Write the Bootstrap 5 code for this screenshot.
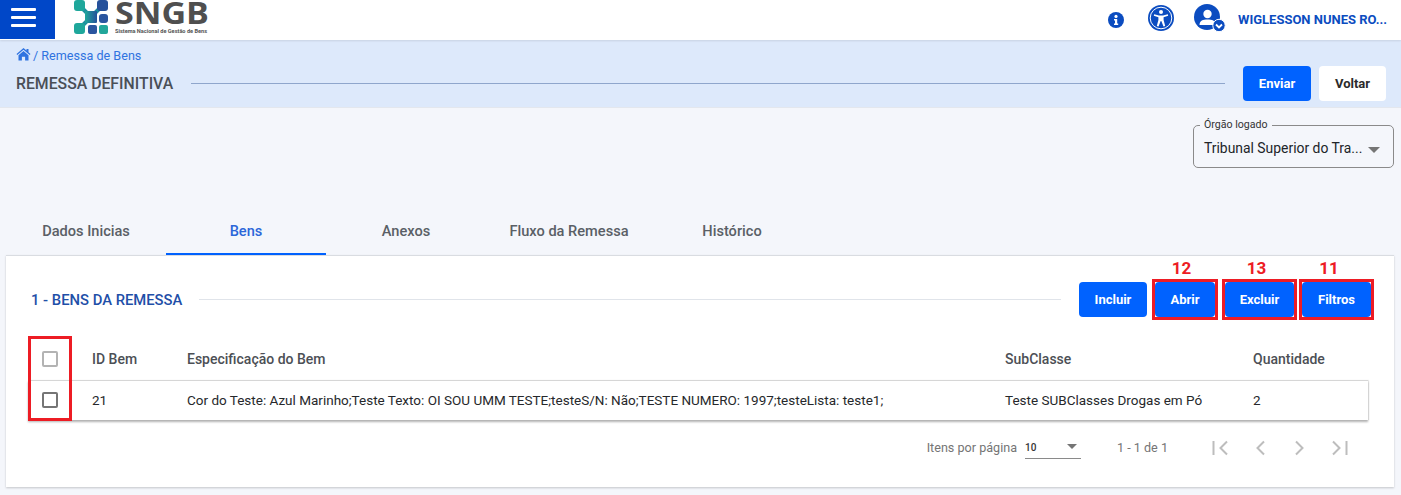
<!DOCTYPE html>
<html lang="pt-BR">
<head>
  <meta charset="UTF-8">
  <meta name="viewport" content="width=device-width, initial-scale=1.0">
  <title>SNGB - Remessa Definitiva</title>
  <link href="https://cdn.jsdelivr.net/npm/bootstrap@5.3.0/dist/css/bootstrap.min.css" rel="stylesheet">
  <style>
    body {
      font-family: Roboto, "Liberation Sans", sans-serif;
      background-color: #f4f6fb;
      height: 495px;
      overflow: hidden;
      color: #212529;
    }
    .top-bar {
      height: 40px;
      background: #fff;
      box-shadow: 0 1px 2px rgba(0, 0, 0, 0.1);
      position: relative;
    }
    .menu-box {
      width: 55px;
      height: 39px;
      background: #0047c8;
      padding: 0 8px 4px 0;
    }
    .menu-box span {
      display: block;
      width: 25px;
      height: 3px;
      margin: 2.5px 0;
      background: #fff;
      border-radius: 1px;
    }
    .logo-wrap { margin-left: 19px; height: 39px; }
    .logo-icon { margin-right: 7px; }
    .logo-name {
      font-family: "Open Sans", sans-serif;
      font-weight: 700;
      font-size: 31px;
      fill: #4f4f4f;
    }
    .logo-sub {
      font-family: Roboto, sans-serif;
      font-size: 5.6px;
      font-weight: 700;
      fill: #555;
    }
    .tool-icons { height: 39px; }
    .tool-info { margin-right: 24px; }
    .tool-access { margin: 0 20px 3px 0; }
    .tool-user { margin-bottom: 3px; }
    .user-name {
      color: #0b4cc0;
      font-size: 13px;
      font-weight: 700;
      margin-left: 12px;
      margin-right: 15px;
      width: 148px;
      white-space: nowrap;
    }
    .title-band {
      height: 68px;
      background: #dde9fb;
      border-bottom: 1px solid #e3e7ee;
      padding: 0 15px 0 16px;
    }
    .crumb {
      font-size: 12.6px;
      color: #2f73e0;
      height: 26px;
      padding-top: 8px;
      line-height: 16px;
    }
    .crumb svg { margin-right: 2px; }
    .page-title {
      font-size: 15.8px;
      font-weight: 500;
      color: #4a4f57;
      white-space: nowrap;
    }
    .title-rule {
      height: 1px;
      background: #8fa6cc;
      margin: 0 18px;
    }
    .act-btn {
      font-size: 13px;
      font-weight: 700;
      height: 35px;
      padding: 0;
      border: 0;
      border-radius: 4px;
      background: #0062ff;
      color: #fff;
    }
    .act-btn:hover { background: #0056e0; color: #fff; }
    .act-light { background: #fff; color: #2b2b2b; }
    .act-light:hover { background: #fff; color: #2b2b2b; }
    .org-row { height: 108px; padding: 17px 7px 0 0; }
    .org-field {
      width: 201px;
      height: 43px;
      border: 1px solid #8a8a8a;
      border-radius: 5px;
      position: relative;
      padding: 12px 10px 0;
      font-size: 13.9px;
      line-height: 20px;
    }
    .org-label {
      position: absolute;
      top: -8px;
      left: 6px;
      padding: 0 4px;
      font-size: 10.6px;
      line-height: 13px;
      color: #333;
      background: #f4f6fb;
    }
    .org-caret, .page-caret {
      width: 0;
      height: 0;
      border-left: 5px solid transparent;
      border-right: 5px solid transparent;
      border-top: 5px solid #757575;
    }
    .org-caret { position: absolute; right: 13px; top: 21px; border-width: 6px 6px 0; }
    .tab-strip { padding-left: 6px; height: 39px; }
    .tab-item {
      min-width: 160px;
      padding: 0 24px;
      text-align: center;
      font-size: 14.6px;
      font-weight: 500;
      line-height: 30px;
      color: #5a5f66;
      height: 39px;
      white-space: nowrap;
    }
    .tab-on { color: #2b66d9; border-bottom: 2px solid #0062ff; }
    .tab-wide { width: 166px; padding: 0; }
    .main-panel {
      margin: 0 7px 0 6px;
      height: 232px;
      background: #fff;
      border-top: 1px solid #d9dce1;
      box-shadow: 0 1px 2px rgba(0, 0, 0, 0.2);
      position: relative;
      padding: 26px 20px 0 22px;
    }
    .panel-head { height: 35px; padding-left: 3px; }
    .panel-title {
      font-size: 14.8px;
      font-weight: 500;
      color: #1f4fa8;
      white-space: nowrap;
      padding-top: 1px;
    }
    .panel-rule { height: 1px; background: #e0e4ea; margin: 0 18px 0 17px; }
    .mark-box {
      position: relative;
      flex: none;
      border: 3px solid #ed1c24;
      height: 41px;
    }
    .mark-box .act-btn { width: 100%; display: block; }
    .mark-abrir { width: 66px; margin-left: 5px; }
    .mark-excluir { width: 75px; margin-left: 4px; }
    .mark-filtros { width: 75px; margin-left: 2px; }
    .mark-num {
      position: absolute;
      top: -24px;
      left: 0;
      right: 0;
      text-align: center;
      color: #ed1c24;
      font-size: 17px;
      font-weight: 700;
      line-height: 20px;
    }
    .mark-abrir .mark-num { padding-right: 7px; }
    .mark-excluir .mark-num { padding-right: 6px; }
    .mark-filtros .mark-num { padding-right: 15px; }
    .bens-table {
      width: 1340px;
      margin: 22px 0 0;
      table-layout: fixed;
      border-collapse: collapse;
      font-size: 13.5px;
    }
    .bens-table th {
      height: 41px;
      font-size: 14px;
      font-weight: 500;
      color: #4c4f55;
      border-bottom: 1px solid #d6d6d6;
      vertical-align: middle;
    }
    .bens-table td { height: 40px; vertical-align: middle; color: #26282b; white-space: nowrap; }
    .bens-table tbody tr { box-shadow: 0 2px 2px rgba(0, 0, 0, 0.3), 1px 0 1px rgba(0, 0, 0, 0.08); }
    .check-cell { padding-left: 14px; }
    .fake-check {
      display: block;
      width: 16px;
      height: 16px;
      border: 2px solid #757575;
      border-radius: 2px;
    }
    .fake-check-off { border-color: #b3b3b3; }
    .check-mark {
      position: absolute;
      left: 22px;
      top: 80px;
      width: 44px;
      height: 85px;
      border: 3px solid #ed1c24;
    }
    .pager { height: 56px; font-size: 12.6px; color: #757575; padding-right: 26px; }
    .pager-size {
      width: 56px;
      height: 22px;
      border-bottom: 1px solid #8a8a8a;
      font-size: 10px;
      font-weight: 500;
      color: #333;
      margin: 0 36px 0 8px;
      padding-top: 3px;
    }
    .page-ctrl { margin-left: 44px; gap: 24px; }
    .page-ctrl svg { display: block; }
  </style>
</head>
<body>
  <header class="top-bar d-flex align-items-start">
    <div class="menu-box d-flex flex-column align-items-center justify-content-center">
      <span></span><span></span><span></span>
    </div>
    <div class="logo-wrap d-flex align-items-start">
      <svg width="34" height="34" viewBox="0 0 34 34" class="logo-icon">
        <defs>
          <linearGradient id="lg" x1="0" y1="0" x2="1" y2="0">
            <stop offset="0" stop-color="#1ea79b"/><stop offset="1" stop-color="#26519b"/>
          </linearGradient>
        </defs>
        <path d="M8 8 L13 13 M26 8 L21 13 M8 26 L13 21" stroke="#1d8f9f" stroke-width="4"/>
        <rect x="0" y="0" width="11" height="11" rx="3" fill="#1ea79b"/>
        <rect x="23" y="0" width="11" height="11" rx="3" fill="#26519b"/>
        <rect x="11" y="11" width="12" height="12" rx="1" fill="url(#lg)"/>
        <rect x="25" y="14" width="9" height="9" rx="3" fill="#2a559f"/>
        <rect x="0" y="23" width="11" height="11" rx="3" fill="#1ea79b"/>
        <rect x="14" y="25" width="9" height="9" rx="2" fill="#2a559f"/>
        <rect x="25" y="25" width="9" height="9" rx="2" fill="#22a69a"/>
      </svg>
      <svg width="96" height="35" viewBox="0 0 96 35">
        <text class="logo-name" x="0" y="24" textLength="94" lengthAdjust="spacingAndGlyphs">SNGB</text>
        <text class="logo-sub" x="0" y="33" textLength="92">Sistema Nacional de Gestão de Bens</text>
      </svg>
    </div>
    <div class="tool-icons ms-auto d-flex align-items-center">
      <svg width="16" height="16" viewBox="0 0 16 16" class="tool-info">
        <circle cx="8" cy="8" r="8" fill="#0b4cc0"/>
        <circle cx="8" cy="4.400" r="1.600" fill="#fff"/>
        <path d="M6 7h3.200v4.400h1V13H6v-1.600h1V8.600H6z" fill="#fff"/>
      </svg>
      <svg width="26" height="26" viewBox="0 0 26 26" class="tool-access">
        <circle cx="13" cy="13" r="13" fill="#0b4cc0"/>
        <circle cx="13" cy="13" r="10.800" fill="none" stroke="#fff" stroke-width="1"/>
        <circle cx="13" cy="7" r="2" fill="#fff"/>
        <path d="M6.200 9.200 L11 10.400 H15 L19.800 9.200 L20.200 10.800 L15.600 12.200 V15 L17.200 21 L15.500 21.400 L13.300 16 H12.700 L10.500 21.400 L8.800 21 L10.400 15 V12.200 L5.800 10.800 Z" fill="#fff"/>
      </svg>
      <svg width="32" height="28" viewBox="0 0 32 28" class="tool-user">
        <circle cx="13" cy="13" r="13" fill="#0b4cc0"/>
        <circle cx="13.500" cy="10" r="4.200" fill="#fff"/>
        <path d="M5.500 21 C5.500 16.500 9 15.500 13.500 15.500 S21.500 16.500 21.500 21 Z" fill="#fff"/>
        <circle cx="25" cy="21.500" r="6.200" fill="#0b4cc0" stroke="#fff" stroke-width="1"/>
        <path d="M22 20.500 L25 23.500 L28 20.500" fill="none" stroke="#fff" stroke-width="1.800"/>
      </svg>
      <div class="user-name">WIGLESSON NUNES RO...</div>
    </div>
  </header>

  <section class="title-band">
    <div class="crumb d-flex align-items-start">
      <svg width="15" height="13" viewBox="0 0 14 13">
        <path d="M7 0 L10 2.600 V1 H12 V4.300 L14 6 L13.200 7 L7 1.800 L.8 7 L0 6 Z M7 3 L12 7.200 V12.500 H8.600 V8.800 H5.400 V12.500 H2 V7.200 Z" fill="#2f73e0"/>
      </svg>
      <span>/ Remessa de Bens</span>
    </div>
    <div class="d-flex align-items-center">
      <div class="page-title">REMESSA DEFINITIVA</div>
      <div class="title-rule flex-grow-1"></div>
      <button class="btn act-btn" style="width:68px">Enviar</button>
      <button class="btn act-btn act-light ms-2" style="width:67px">Voltar</button>
    </div>
  </section>

  <div class="org-row d-flex justify-content-end">
    <div class="org-field">
      <span class="org-label">Órgão logado</span>
      <span>Tribunal Superior do Tra...</span>
      <span class="org-caret"></span>
    </div>
  </div>

  <nav class="tab-strip d-flex">
    <div class="tab-item">Dados Inicias</div>
    <div class="tab-item tab-on">Bens</div>
    <div class="tab-item">Anexos</div>
    <div class="tab-item tab-wide">Fluxo da Remessa</div>
    <div class="tab-item">Histórico</div>
  </nav>

  <section class="main-panel">
    <div class="panel-head d-flex align-items-center">
      <div class="panel-title">1 - BENS DA REMESSA</div>
      <div class="panel-rule flex-grow-1"></div>
      <button class="btn act-btn flex-shrink-0" style="width:68px">Incluir</button>
      <div class="mark-box mark-abrir"><span class="mark-num">12</span><button class="btn act-btn">Abrir</button></div>
      <div class="mark-box mark-excluir"><span class="mark-num">13</span><button class="btn act-btn">Excluir</button></div>
      <div class="mark-box mark-filtros"><span class="mark-num">11</span><button class="btn act-btn">Filtros</button></div>
    </div>

    <table class="bens-table">
      <colgroup>
        <col style="width:63px"><col style="width:95px"><col style="width:818px"><col style="width:248px"><col>
      </colgroup>
      <thead>
        <tr>
          <th class="check-cell"><span class="fake-check fake-check-off"></span></th>
          <th>ID Bem</th>
          <th>Especificação do Bem</th>
          <th>SubClasse</th>
          <th>Quantidade</th>
        </tr>
      </thead>
      <tbody>
        <tr>
          <td class="check-cell"><span class="fake-check"></span></td>
          <td>21</td>
          <td>Cor do Teste: Azul Marinho;Teste Texto: OI SOU UMM TESTE;testeS/N: Não;TESTE NUMERO: 1997;testeLista: teste1;</td>
          <td>Teste SUBClasses Drogas em Pó</td>
          <td>2</td>
        </tr>
      </tbody>
    </table>
    <div class="check-mark"></div>

    <div class="pager d-flex align-items-center justify-content-end">
      <span>Itens por página</span>
      <div class="pager-size d-flex justify-content-between">
        <span>10</span><span class="page-caret mt-1 me-1"></span>
      </div>
      <span>1 - 1 de 1</span>
      <div class="page-ctrl d-flex">
        <svg width="16" height="16" viewBox="0 0 16 16" fill="none" stroke="#bdbdbd" stroke-width="2"><path d="M1.500 1v14M15 1.500 8.500 8l6.500 6.500"/></svg>
        <svg width="16" height="16" viewBox="0 0 16 16" fill="none" stroke="#bdbdbd" stroke-width="2"><path d="M12 1.500 5.500 8l6.500 6.500"/></svg>
        <svg width="16" height="16" viewBox="0 0 16 16" fill="none" stroke="#bdbdbd" stroke-width="2"><path d="M4 1.500 10.500 8 4 14.500"/></svg>
        <svg width="16" height="16" viewBox="0 0 16 16" fill="none" stroke="#bdbdbd" stroke-width="2"><path d="M14.500 1v14M1 1.500 7.500 8 1 14.500"/></svg>
      </div>
    </div>
  </section>
  <script src="https://cdn.jsdelivr.net/npm/bootstrap@5.3.0/dist/js/bootstrap.bundle.min.js"></script>
</body>
</html>
